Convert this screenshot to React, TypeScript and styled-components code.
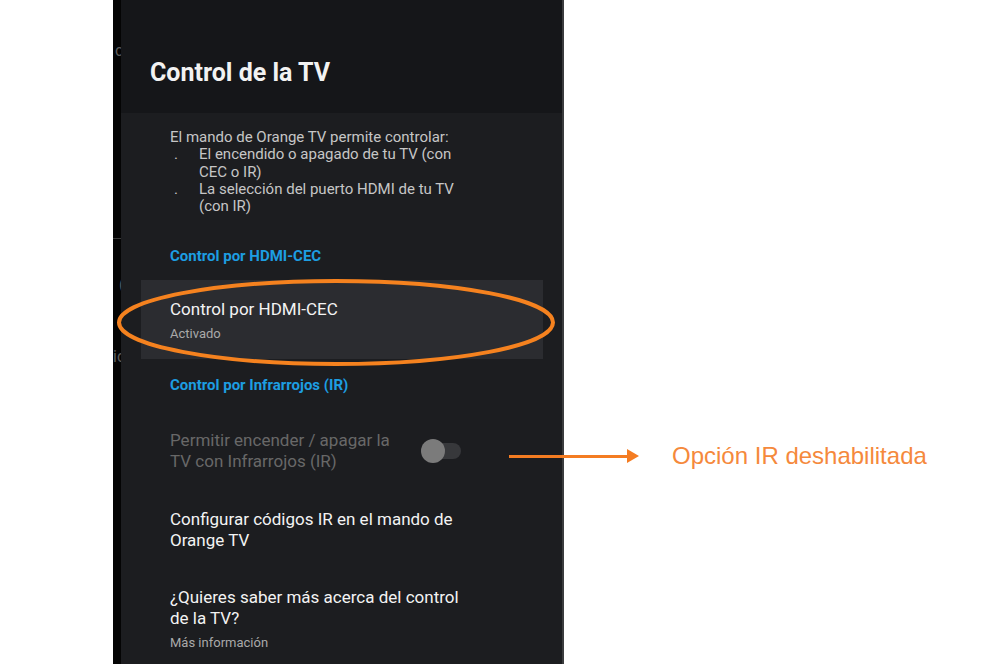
import React from 'react';
import styled, { createGlobalStyle } from 'styled-components';

const Global = createGlobalStyle`
  html, body { margin: 0; padding: 0; background: #ffffff; }
  body { font-family: Roboto, "Noto Sans", "Liberation Sans", sans-serif; }
  * { box-sizing: border-box; }
`;

const Stage = styled.div`
  position: relative;
  width: 1000px;
  height: 664px;
  overflow: hidden;
  display: flex;
  background: #ffffff;
`;

const WhiteMargin = styled.div`
  width: 113px;
  flex: none;
`;

const BackScreen = styled.div`
  width: 8px;
  flex: none;
  background: #040404;
  overflow: hidden;
  display: flex;
  flex-direction: column;
  color: #5c5c5c;
  font-size: 16px;
`;

const Ghost = styled.span<{ $top: number; $left: number }>`
  display: block;
  margin-top: ${(p) => p.$top}px;
  margin-left: ${(p) => p.$left}px;
  line-height: 16px;
  white-space: nowrap;
`;

const GhostRule = styled.div<{ $top: number }>`
  margin-top: ${(p) => p.$top}px;
  height: 1px;
  background: #3a3a3a;
  flex: none;
`;

const Panel = styled.section`
  width: 443px;
  flex: none;
  display: flex;
  flex-direction: column;
  background: #1c1d20;
  border-right: 2px solid #3b3c3e;
`;

const Header = styled.header`
  height: 113px;
  flex: none;
  background: #151619;
  padding: 59px 29px 0;
`;

const Title = styled.h1`
  margin: 0;
  font-size: 25px;
  line-height: 28px;
  font-weight: 700;
  color: #f2f2f2;
`;

const Body = styled.div`
  padding-top: 16px;
  display: flex;
  flex-direction: column;
`;

const Description = styled.div`
  padding: 0 0 0 49px;
  width: 340px;
  font-size: 15px;
  line-height: 17.25px;
  color: #c6c6c6;
`;

const Bullets = styled.ul`
  list-style: none;
  margin: 0;
  padding: 0;
`;

const Bullet = styled.li`
  display: grid;
  grid-template-columns: 29px 1fr;
`;

const Dot = styled.span`
  padding-left: 4px;
`;

const SectionHeader = styled.h2<{ $top: number }>`
  margin: ${(p) => p.$top}px 0 0;
  padding: 0 49px;
  font-size: 15px;
  line-height: 16px;
  font-weight: 700;
  color: #1d9ee2;
`;

const Item = styled.div<{ $top?: number; $active?: boolean }>`
  margin: ${(p) => p.$top ?? 0}px 19px 0 20px;
  padding: 19px 29px 17px;
  min-height: 79px;
  display: flex;
  align-items: center;
  background: ${(p) => (p.$active ? '#2b2c30' : 'transparent')};
`;

const TextCol = styled.div<{ $width?: number }>`
  display: flex;
  flex-direction: column;
  ${(p) => (p.$width ? `flex: 0 0 ${p.$width}px;` : 'max-width: 300px;')}
`;

const ItemTitle = styled.div<{ $disabled?: boolean }>`
  font-size: 17px;
  line-height: 21px;
  color: ${(p) => (p.$disabled ? '#686868' : '#f3f3f3')};
`;

const ItemSub = styled.div`
  margin-top: 6px;
  font-size: 13px;
  line-height: 16px;
  color: #a9a9a9;
`;

const Switch = styled.div`
  position: relative;
  width: 40px;
  height: 24px;
  margin-left: 21px;
  flex: none;
`;

const Track = styled.span`
  position: absolute;
  right: 0;
  top: 4px;
  width: 34px;
  height: 16px;
  border-radius: 8px;
  background: #37383b;
`;

const Thumb = styled.span`
  position: absolute;
  left: 0;
  top: 0;
  width: 24px;
  height: 24px;
  border-radius: 50%;
  background: #7b7b7b;
`;

const Highlight = styled.svg`
  position: absolute;
  left: 115px;
  top: 277px;
  pointer-events: none;
`;

const Callout = styled.div`
  position: absolute;
  left: 509px;
  top: 442px;
  height: 28px;
  display: flex;
  align-items: center;
`;

const ArrowLine = styled.span`
  width: 118px;
  height: 3px;
  background: #f47c22;
`;

const CalloutText = styled.span`
  margin-left: 33px;
  font-family: "Liberation Sans", Arial, sans-serif;
  font-size: 24px;
  color: #f5893c;
  white-space: nowrap;
`;

export default function App() {
  return (
    <>
      <Global />
      <Stage>
        <WhiteMargin />
        <BackScreen>
          <Ghost $top={43} $left={2}>c</Ghost>
          <GhostRule $top={179} />
          <Ghost $top={38} $left={6}>(</Ghost>
          <Ghost $top={56} $left={0}>ic</Ghost>
        </BackScreen>
        <Panel>
          <Header>
            <Title>Control de la TV</Title>
          </Header>
          <Body>
            <Description>
              El mando de Orange TV permite controlar:
              <Bullets>
                <Bullet>
                  <Dot>.</Dot>
                  <span>El encendido o apagado de tu TV (con CEC o IR)</span>
                </Bullet>
                <Bullet>
                  <Dot>.</Dot>
                  <span>La selección del puerto HDMI de tu TV (con IR)</span>
                </Bullet>
              </Bullets>
            </Description>

            <SectionHeader $top={33}>Control por HDMI-CEC</SectionHeader>
            <Item $top={16} $active>
              <TextCol>
                <ItemTitle>Control por HDMI-CEC</ItemTitle>
                <ItemSub>Activado</ItemSub>
              </TextCol>
            </Item>

            <SectionHeader $top={18}>Control por Infrarrojos (IR)</SectionHeader>
            <Item $top={17}>
              <TextCol $width={230}>
                <ItemTitle $disabled>Permitir encender / apagar la TV con Infrarrojos (IR)</ItemTitle>
              </TextCol>
              <Switch>
                <Track />
                <Thumb />
              </Switch>
            </Item>

            <Item>
              <TextCol>
                <ItemTitle>Configurar códigos IR en el mando de Orange TV</ItemTitle>
              </TextCol>
            </Item>

            <Item>
              <TextCol>
                <ItemTitle>¿Quieres saber más acerca del control de la TV?</ItemTitle>
                <ItemSub>Más información</ItemSub>
              </TextCol>
            </Item>
          </Body>
        </Panel>

        <Highlight width="442" height="92" viewBox="0 0 442 92">
          <ellipse cx="221" cy="45.5" rx="217" ry="41.5" fill="none" stroke="#f5821f" strokeWidth="4" />
        </Highlight>

        <Callout>
          <ArrowLine />
          <svg width="12" height="14" viewBox="0 0 12 14">
            <polygon points="0,0 12,7 0,14" fill="#f47c22" />
          </svg>
          <CalloutText>Opción IR deshabilitada</CalloutText>
        </Callout>
      </Stage>
    </>
  );
}
